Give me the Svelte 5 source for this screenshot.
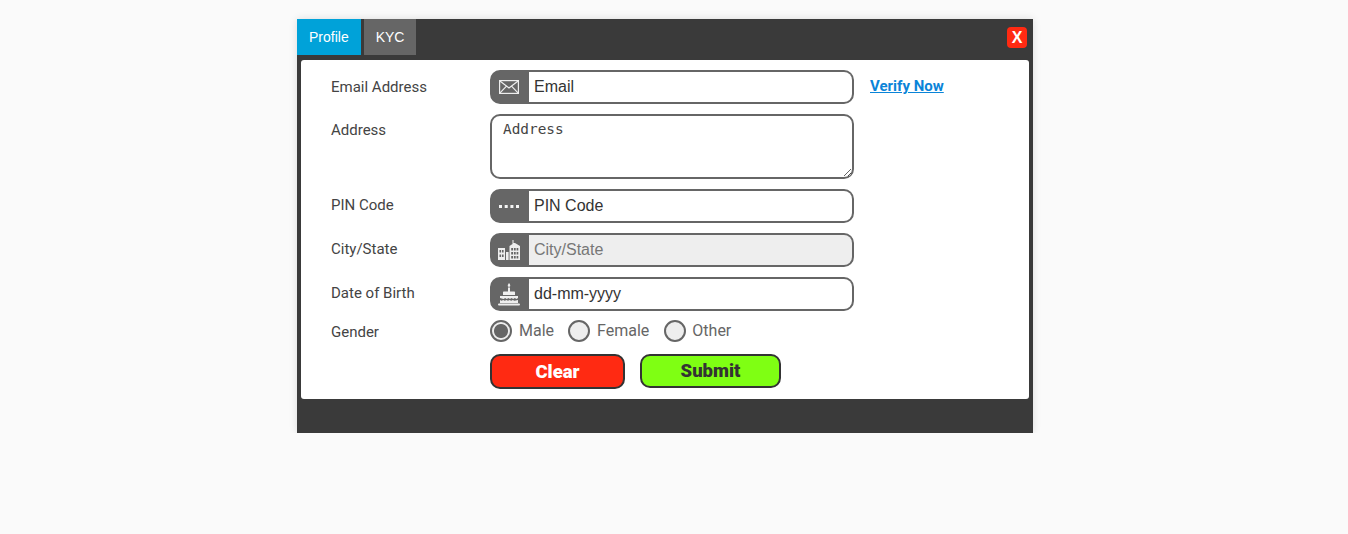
<script>
  let gender = $state('male');
</script>

<div class="modal">
  <div class="head">
    <div class="tabs">
      <button class="tab active">Profile</button>
      <button class="tab">KYC</button>
    </div>
    <button class="close">X</button>
  </div>
  <form class="panel">
    <div class="row">
      <label for="email">Email Address</label>
      <div class="field">
        <span class="addon">
          <svg width="20" height="14" viewBox="0 0 20 14" fill="none" stroke="#eee" stroke-width="1.2"><rect x="0.6" y="0.6" width="18.8" height="12.8"/><path d="M0.6 0.8 10 8l9.4-7.2M0.8 13.2 7.5 6.2M19.2 13.2 12.5 6.2"/></svg>
        </span>
        <input id="email" type="text" placeholder="Email" />
      </div>
      <a class="verify" href="#verify">Verify Now</a>
    </div>
    <div class="row area">
      <label for="address">Address</label>
      <textarea id="address" placeholder="Address"></textarea>
    </div>
    <div class="row low">
      <label for="pin">PIN Code</label>
      <div class="field">
        <span class="addon">
          <svg width="20" height="4" viewBox="0 0 20 4" fill="#f4f4f4"><rect x="0" y="1" width="3" height="3"/><rect x="5.700" y="1" width="3" height="3"/><rect x="11.400" y="1" width="3" height="3"/><rect x="17" y="1" width="3" height="3"/></svg>
        </span>
        <input id="pin" type="text" placeholder="PIN Code" />
      </div>
    </div>
    <div class="row low">
      <label for="city">City/State</label>
      <div class="field">
        <span class="addon">
          <svg width="22" height="22" viewBox="0 0 22 22" fill="#eee"><path fill-rule="evenodd" d="M0 9h7v12H0zM1.500 11v2.500h1.600V11zM4 11v2.500h1.600V11zM1.500 15.500V18h1.600v-2.500zM4 15.500V18h1.600v-2.500z"/><path d="M8 13h2.600v8H8z"/><path fill-rule="evenodd" d="M11.500 21V7l3-2V1h1V3.900L17 4l5 3v14zM13.200 9v2.500h1.800V9zM15.900 9v2.500h1.800V9zM18.600 9v2.500h1.700V9zM13.200 13v2.500h1.800V13zM15.900 13v2.500h1.800V13zM18.600 13v2.500h1.700V13zM13.200 17v2.500h1.800V17zM15.900 17v2.500h1.800V17zM18.600 17v2.500h1.700V17z"/></svg>
        </span>
        <input id="city" type="text" placeholder="City/State" disabled />
      </div>
    </div>
    <div class="row low">
      <label for="dob">Date of Birth</label>
      <div class="field">
        <span class="addon">
          <svg width="22" height="24" viewBox="0 0 22 24" fill="#eee"><path d="M11 1c1.200 1.400 1.600 2.400 1 3.400-.4.6-1.600.6-2 0-.6-1 0-2 1-3.400z"/><rect x="10" y="5.500" width="2" height="5"/><path d="M6 9.500h10c.6 0 1 .4 1 1V13H5v-2.500c0-.6.400-1 1-1z"/><path d="M2 14h18v2l-1.500 1-1.700-1-1.600 1-1.700-1-1.500 1-1.500-1-1.700 1-1.600-1-1.700 1L2 16z"/><path d="M2 18l1.500.8 1.700-.8 1.600.8 1.700-.8 1.500.8 1.500-.8 1.700.8 1.600-.8 1.700.8L20 18v3H2z"/><rect x="0" y="21.500" width="22" height="2" rx="1"/></svg>
        </span>
        <input id="dob" type="text" placeholder="dd-mm-yyyy" />
      </div>
    </div>
    <div class="row gender">
      <span class="lbl">Gender</span>
      <div class="radios">
        <label class="radio"><input type="radio" name="gender" value="male" bind:group={gender} /><span class="rtext">Male</span></label>
        <label class="radio"><input type="radio" name="gender" value="female" bind:group={gender} /><span class="rtext">Female</span></label>
        <label class="radio last"><input type="radio" name="gender" value="other" bind:group={gender} /><span class="rtext">Other</span></label>
      </div>
    </div>
    <div class="actions">
      <button type="button" class="btn clear">Clear</button>
      <button type="button" class="btn submit">Submit</button>
    </div>
  </form>
</div>

<style>
  :global(body) {
    margin: 0;
    background: #fafafa;
    font-family: Roboto, sans-serif;
  }
  .modal {
    box-sizing: border-box;
    width: 736px;
    height: 414px;
    margin: 19px 0 0 297px;
    background: #3a3a3a;
    box-shadow: 0 0 8px rgba(0, 0, 0, 0.12);
  }
  .head {
    height: 41px;
    display: flex;
    justify-content: space-between;
    align-items: flex-start;
    padding-right: 6px;
  }
  .tabs {
    display: flex;
    gap: 3px;
  }
  .tab {
    height: 36px;
    border: 0;
    margin: 0;
    padding: 0 12px;
    background: #666;
    color: #fff;
    font: 14px "Liberation Sans", Arial, sans-serif;
  }
  .tab.active {
    background: #00a2d9;
  }
  .close {
    width: 20px;
    height: 21px;
    margin-top: 8px;
    padding: 0;
    border: 0;
    border-radius: 4px;
    background: #ff2a12;
    color: #fff;
    font: 700 16px "Liberation Sans", Arial, sans-serif;
  }
  .panel {
    box-sizing: border-box;
    height: 339px;
    margin: 0 4px;
    padding: 10px 0 0 30px;
    background: #fff;
    border-radius: 3px;
    display: flex;
    flex-direction: column;
  }
  .row {
    display: flex;
    align-items: center;
    height: 34px;
    margin-bottom: 10px;
  }
  .row > label,
  .lbl {
    width: 159px;
    flex: none;
    font-size: 15px;
    color: #444;
  }
  .lbl {
    padding-top: 2px;
  }
  .row.low > label {
    padding-bottom: 2px;
  }
  .row.area {
    height: 65px;
    align-items: flex-start;
  }
  .row.area > label {
    padding-top: 7px;
  }
  .field {
    box-sizing: border-box;
    width: 364px;
    height: 34px;
    display: flex;
    border: 2px solid #666;
    border-radius: 10px;
    background: #666;
    overflow: hidden;
  }
  .addon {
    box-sizing: border-box;
    width: 37px;
    padding-right: 4px;
    flex: none;
    background: #666;
    display: flex;
    align-items: center;
    justify-content: center;
  }
  .field input {
    flex: 1;
    min-width: 0;
    border: 0;
    outline: 0;
    padding: 0 5px 1px;
    font: 16px "Liberation Sans", Arial, sans-serif;
    color: #333;
    background: #fff;
  }
  .field input::placeholder {
    color: #333;
    opacity: 1;
  }
  .field input:disabled {
    background: #eee;
  }
  .field input:disabled::placeholder {
    color: #777;
  }
  textarea {
    box-sizing: border-box;
    width: 364px;
    height: 65px;
    margin: 0;
    padding: 5px 11px;
    border: 2px solid #666;
    border-radius: 10px;
    outline: 0;
    font: 14.400px "DejaVu Sans Mono", monospace;
    color: #333;
  }
  textarea::placeholder {
    color: #444;
    opacity: 1;
  }
  .verify {
    margin: -2px 0 0 16px;
    font-size: 15px;
    font-weight: 700;
    color: #0a84d8;
  }
  .row.gender {
    height: 22px;
    margin: -1px 0 12px;
  }
  .radios {
    display: flex;
    gap: 14px;
  }
  .radio {
    display: flex;
    align-items: center;
    gap: 7px;
    font-size: 16px;
    color: #666;
  }
  .radio.last {
    margin-left: 1px;
    gap: 6px;
  }
  .rtext {
    padding-bottom: 2px;
  }
  .radio input {
    appearance: none;
    box-sizing: border-box;
    width: 22px;
    height: 22px;
    margin: 0;
    border: 2px solid #666;
    border-radius: 50%;
    background: #eee;
  }
  .radio input:checked {
    background: radial-gradient(circle, #666 0 6.5px, #eee 7.5px);
  }
  .actions {
    display: flex;
    gap: 15px;
    padding-left: 159px;
    align-items: flex-start;
  }
  .btn {
    box-sizing: border-box;
    padding: 0;
    border: 2px solid #333;
    border-radius: 10px;
    font: 900 18.500px Roboto, sans-serif;
  }
  .clear {
    width: 135px;
    height: 35px;
    background: #ff2a12;
    color: #fff;
  }
  .submit {
    width: 141px;
    height: 34px;
    background: #7fff13;
    color: #333;
  }
</style>
